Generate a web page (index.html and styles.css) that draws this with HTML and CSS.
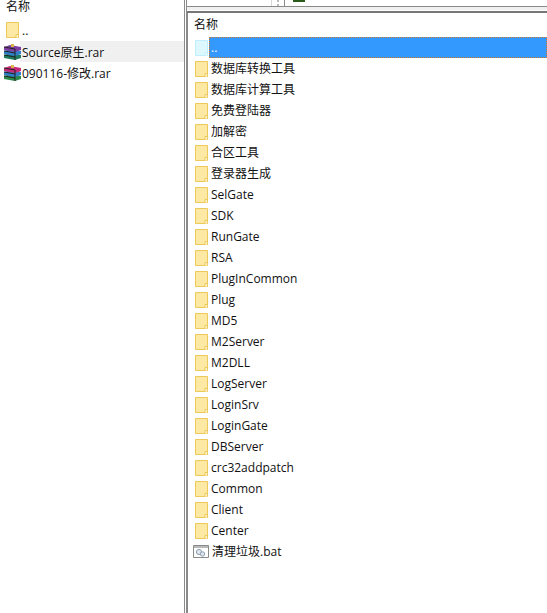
FILE: index.html
```html
<!DOCTYPE html>
<html lang="zh">
<head>
<meta charset="utf-8">
<title>文件列表</title>
<link rel="stylesheet" href="styles.css">
</head>
<body>
<svg class="defs" width="0" height="0">
  <defs>
    <symbol id="folder" viewBox="0 0 13 16">
      <path d="M.5.5h12v15H.5z" fill="#fde9a3" stroke="#edc95a"/>
      <path d="M10 15.5v-3h2.5v3" fill="#fff6d5" stroke="#edc95a"/>
    </symbol>
    <symbol id="rar-blue" viewBox="0 0 18 16">
      <path d="M0 11l6-2 11 2v3l-6 2-11-2z" fill="#1f7a5c"/>
      <path d="M0 7l6-2 11 2v3l-6 2-11-2z" fill="#2f7fc9"/>
      <path d="M0 3l6-2 11 2v3l-6 2-11-2z" fill="#7b3fa0"/>
      <path d="M0 3l11 2v11M0 7l11 2M0 11l11 2" fill="none" stroke="#222"/>
      <path d="M7 0h3v3H7z" fill="#d9b84a"/>
    </symbol>
    <symbol id="rar-red" viewBox="0 0 18 16">
      <path d="M0 11l6-2 11 2v3l-6 2-11-2z" fill="#2a8a4a"/>
      <path d="M0 7l6-2 11 2v3l-6 2-11-2z" fill="#2f7fc9"/>
      <path d="M0 3l6-2 11 2v3l-6 2-11-2z" fill="#c42a7a"/>
      <path d="M0 3l11 2v11M0 7l11 2M0 11l11 2" fill="none" stroke="#222"/>
      <path d="M7 0h3v3H7z" fill="#d9b84a"/>
    </symbol>
    <symbol id="bat" viewBox="0 0 16 13">
      <path d="M.5.5h15v12H.5z" fill="#fff" stroke="#8a8a8a"/>
      <path d="M1 1h14v2H1z" fill="#b9b9b9"/>
      <circle cx="6" cy="7" r="2.6" fill="#dfe6ee" stroke="#8fa0b0"/>
      <circle cx="9.5" cy="9" r="2.2" fill="#dfe6ee" stroke="#8fa0b0"/>
    </symbol>
  </defs>
</svg>
<div class="app">
  <aside class="left">
    <div class="left-head">名称</div>
    <div class="row left-up"><svg class="ic-folder"><use href="#folder"/></svg><span class="up-label">..</span></div>
    <div class="row lrow hover"><svg class="ic-rar"><use href="#rar-blue"/></svg><span class="ltext">Source原生.rar</span></div>
    <div class="row lrow"><svg class="ic-rar"><use href="#rar-red"/></svg><span class="ltext">090116-修改.rar</span></div>
  </aside>
  <div class="sep"></div>
  <main class="right">
    <div class="toolbar">
      <div class="tb-box tb-a"></div>
      <div class="grip"></div>
      <div class="tb-box tb-b"><span class="tb-icon"></span></div>
    </div>
    <div class="lines"></div>
    <div class="list">
      <div class="right-head">名称</div>
      <div class="row rrow selected-row"><svg class="ic-folder faded"><use href="#folder"/></svg><span class="rtext sel">..</span></div>
      <div class="row rrow"><svg class="ic-folder"><use href="#folder"/></svg><span class="rtext">数据库转换工具</span></div>
      <div class="row rrow"><svg class="ic-folder"><use href="#folder"/></svg><span class="rtext">数据库计算工具</span></div>
      <div class="row rrow"><svg class="ic-folder"><use href="#folder"/></svg><span class="rtext">免费登陆器</span></div>
      <div class="row rrow"><svg class="ic-folder"><use href="#folder"/></svg><span class="rtext">加解密</span></div>
      <div class="row rrow"><svg class="ic-folder"><use href="#folder"/></svg><span class="rtext">合区工具</span></div>
      <div class="row rrow"><svg class="ic-folder"><use href="#folder"/></svg><span class="rtext">登录器生成</span></div>
      <div class="row rrow"><svg class="ic-folder"><use href="#folder"/></svg><span class="rtext">SelGate</span></div>
      <div class="row rrow"><svg class="ic-folder"><use href="#folder"/></svg><span class="rtext">SDK</span></div>
      <div class="row rrow"><svg class="ic-folder"><use href="#folder"/></svg><span class="rtext">RunGate</span></div>
      <div class="row rrow"><svg class="ic-folder"><use href="#folder"/></svg><span class="rtext">RSA</span></div>
      <div class="row rrow"><svg class="ic-folder"><use href="#folder"/></svg><span class="rtext">PlugInCommon</span></div>
      <div class="row rrow"><svg class="ic-folder"><use href="#folder"/></svg><span class="rtext">Plug</span></div>
      <div class="row rrow"><svg class="ic-folder"><use href="#folder"/></svg><span class="rtext">MD5</span></div>
      <div class="row rrow"><svg class="ic-folder"><use href="#folder"/></svg><span class="rtext">M2Server</span></div>
      <div class="row rrow"><svg class="ic-folder"><use href="#folder"/></svg><span class="rtext">M2DLL</span></div>
      <div class="row rrow"><svg class="ic-folder"><use href="#folder"/></svg><span class="rtext">LogServer</span></div>
      <div class="row rrow"><svg class="ic-folder"><use href="#folder"/></svg><span class="rtext">LoginSrv</span></div>
      <div class="row rrow"><svg class="ic-folder"><use href="#folder"/></svg><span class="rtext">LoginGate</span></div>
      <div class="row rrow"><svg class="ic-folder"><use href="#folder"/></svg><span class="rtext">DBServer</span></div>
      <div class="row rrow"><svg class="ic-folder"><use href="#folder"/></svg><span class="rtext">crc32addpatch</span></div>
      <div class="row rrow"><svg class="ic-folder"><use href="#folder"/></svg><span class="rtext">Common</span></div>
      <div class="row rrow"><svg class="ic-folder"><use href="#folder"/></svg><span class="rtext">Client</span></div>
      <div class="row rrow"><svg class="ic-folder"><use href="#folder"/></svg><span class="rtext">Center</span></div>
      <div class="row rrow bat-row"><svg class="ic-bat"><use href="#bat"/></svg><span class="rtext">清理垃圾.bat</span></div>
    </div>
  </main>
</div>
</body>
</html>
```
FILE: styles.css
```css
* { box-sizing: border-box; }
html, body { margin: 0; padding: 0; height: 100%; background: #fff; }
body {
  font-family: "Open Sans", "Noto Sans CJK SC", sans-serif;
  font-size: 12px;
  color: #111;
  overflow: hidden;
}
.defs { display: block; height: 0; }
.app { display: flex; height: 613px; width: 547px; }
.left { width: 184px; flex: none; display: flex; flex-direction: column; background: #fff; }
.left-head { height: 14px; line-height: 14px; padding-left: 6px; }
.row { display: flex; align-items: center; height: 21px; flex: none; white-space: nowrap; }
.left-up { height: 27px; padding-left: 6px; padding-top: 5px; }
.up-label { margin-left: 3px; }
.lrow { padding-left: 4px; }
.hover { background: #f0f0f0; margin-left: 0; background-image: linear-gradient(to right, #fff 20px, #f0f0f0 20px); }
.ltext { margin-left: 0; padding-left: 0; }
.ic-folder { width: 13px; height: 16px; flex: none; }
.ic-rar { width: 18px; height: 16px; flex: none; }
.ic-bat { width: 16px; height: 13px; flex: none; }
.faded { opacity: .45; filter: hue-rotate(150deg); }
.sep { width: 2px; flex: none; background: #fff; border-left: 1px solid #8a8a8a; }
.right { flex: 1; min-width: 0; display: flex; flex-direction: column; border-left: 1px solid #8a8a8a; }
.toolbar { height: 7px; flex: none; display: flex; border-bottom: 1px solid #8a8a8a; }
.tb-box { height: 6px; background: #fff; }
.tb-a { width: 85px; border-right: 1px solid #d8d8d8; }
.grip { width: 12px; background: repeating-linear-gradient(to bottom, #bbb 0 2px, #fff 2px 4px) center/2px 100% no-repeat; }
.tb-b { flex: 1; border-left: 1px solid #8a8a8a; padding-left: 8px; }
.tb-icon { display: block; width: 12px; height: 2px; background: #2a5a1a; }
.lines { height: 6px; flex: none; border-bottom: 2px solid #777; border-top: 3px solid #f0f0f0; }
.list { flex: 1; min-height: 0; display: flex; flex-direction: column; border-left: 1px solid #8a8a8a; }
.right-head { height: 24px; line-height: 24px; padding-left: 6px; flex: none; }
.rrow { padding-left: 7px; }
.rtext { margin-left: 3px; padding-left: 0; height: 21px; line-height: 21px; }
.sel {
  flex: 1;
  margin-left: 1px;
  padding-left: 2px;
  background: #3399ff;
  color: #fff;
  outline: 1px dotted #c87a30;
  outline-offset: -1px;
}
.bat-row { padding-left: 5px; }
.bat-row .rtext { margin-left: 3px; }
```
